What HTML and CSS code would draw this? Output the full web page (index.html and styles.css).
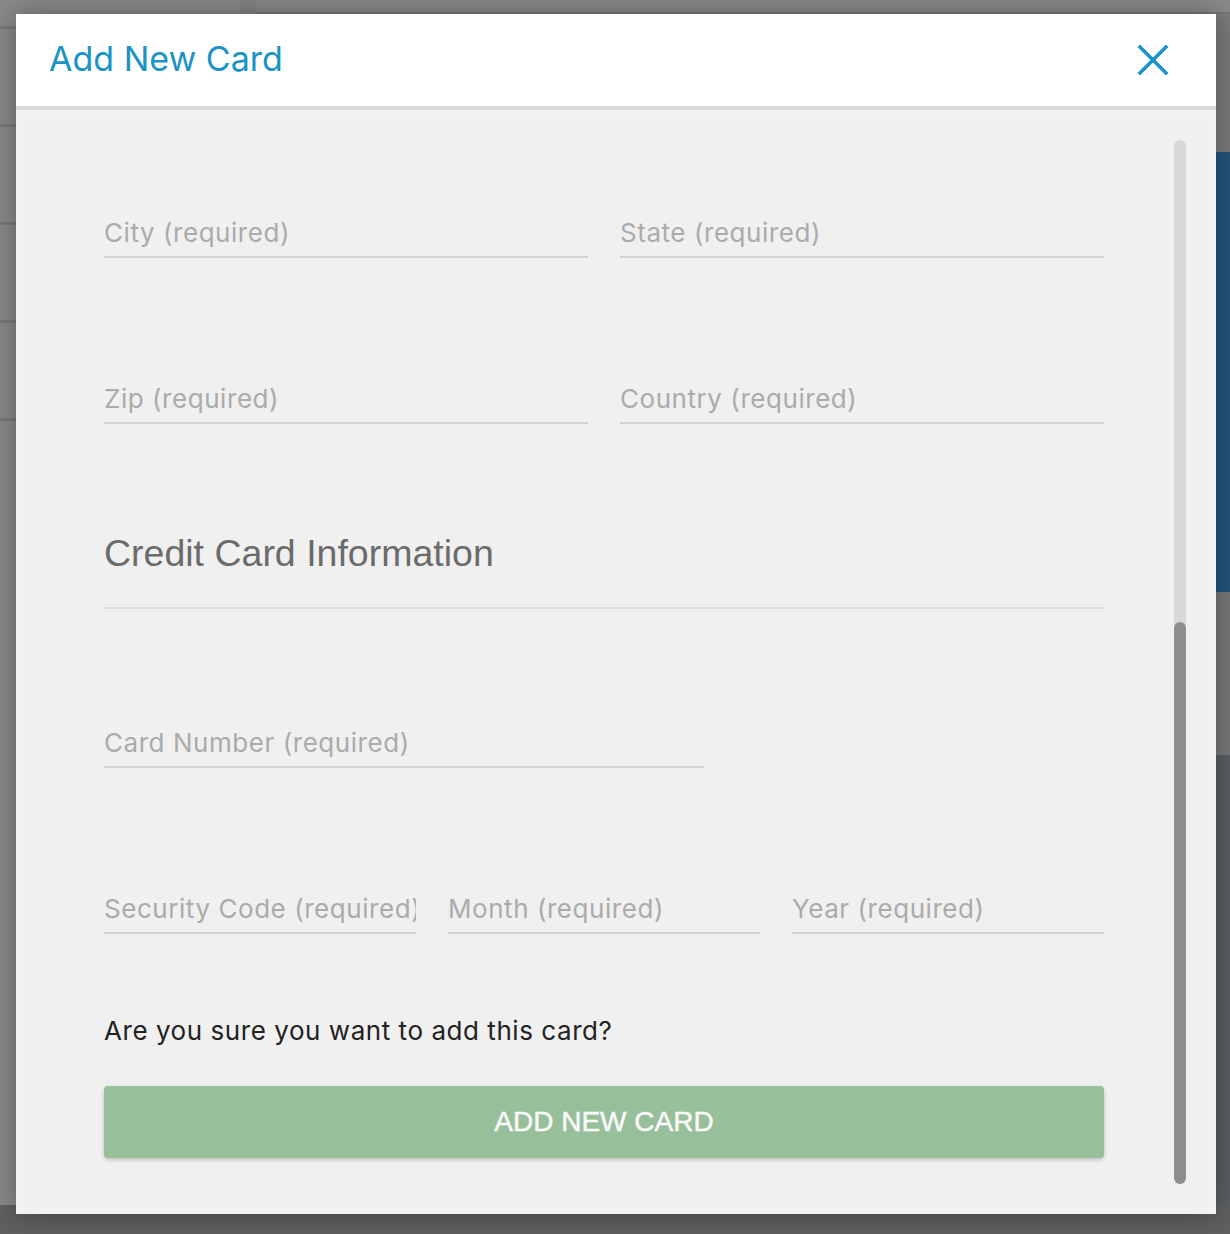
FILE: index.html
```html
<!DOCTYPE html>
<html lang="en">
<head>
    <meta charset="UTF-8">
    <meta name="viewport" content="width=device-width, initial-scale=1.0">
    <title>Add New Card</title>
    <link rel="stylesheet" href="styles.css">
</head>
<body>
    <!-- page behind the dialog -->
    <div class="page">
        <div class="sidebar">
            <div class="side-item"></div>
            <div class="side-item"></div>
            <div class="side-item"></div>
            <div class="side-item"></div>
            <div class="side-item"></div>
        </div>
        <div class="main">
            <div class="topbar"></div>
            <div class="main-gap"></div>
            <div class="block-blue"></div>
            <div class="block-grey"></div>
            <div class="block-slate"></div>
        </div>
    </div>

    <div class="modal">
        <div class="modal-header">
            <h1>Add New Card</h1>
            <button class="close-button" aria-label="Close">
                <svg width="30" height="30" viewBox="0 0 30 30">
                    <path d="M2 2 L28 28 M28 2 L2 28" stroke="#1a93c5" stroke-width="3.5" stroke-linecap="square" fill="none"/>
                </svg>
            </button>
        </div>
        <div class="modal-body">
            <div class="panel">
                <form class="card-form">
                    <div class="row row-first">
                        <input type="text" placeholder="City (required)">
                        <input type="text" placeholder="State (required)">
                    </div>
                    <div class="row">
                        <input type="text" placeholder="Zip (required)">
                        <input type="text" placeholder="Country (required)">
                    </div>

                    <h2>Credit Card Information</h2>

                    <div class="row row-single">
                        <input type="text" placeholder="Card Number (required)">
                    </div>
                    <div class="row row-three">
                        <input type="text" placeholder="Security Code (required)">
                        <input type="text" placeholder="Month (required)">
                        <input type="text" placeholder="Year (required)">
                    </div>

                    <p class="confirm">Are you sure you want to add this card?</p>
                    <button type="submit" class="add-button">ADD NEW CARD</button>
                </form>
                <div class="scrollbar">
                    <div class="thumb"></div>
                </div>
            </div>
        </div>
    </div>
</body>
</html>
```

FILE: styles.css
```css
body {
    margin: 0;
    height: 100vh;
    overflow: hidden;
    background-color: #606060;
    font-family: Inter, "Noto Sans", sans-serif;
}

/* background page */
.page {
    display: flex;
    height: 100%;
}

.sidebar {
    width: 256px;
    height: 1205px;
    background-color: #8a8a8a;
    border-right: 16px solid #848484;
    padding-top: 26px;
    box-sizing: border-box;
}

.side-item {
    height: 95px;
    border-top: 3px solid #7a7a7a;
}

.main {
    flex: 1;
    display: flex;
    flex-direction: column;
    background-color: #606060;
}

.topbar {
    height: 12px;
    background-color: #8a8a8a;
    border-bottom: 2px solid #767676;
}

.main-gap {
    height: 138px;
    background-color: #7c7c7c;
}

.block-blue {
    height: 440px;
    background-color: #24557b;
}

.block-grey {
    height: 163px;
    background-color: #7a7a7a;
}

.block-slate {
    height: 450px;
    background-color: #5a6064;
}

/* dialog */
.modal {
    position: fixed;
    left: 16px;
    top: 14px;
    width: 1200px;
    height: 1200px;
    display: flex;
    flex-direction: column;
    background-color: #f2f2f2;
    box-shadow: 0 0 28px rgba(0, 0, 0, 0.35);
}

.modal-header {
    height: 96px;
    box-sizing: border-box;
    display: flex;
    align-items: center;
    justify-content: space-between;
    padding: 0 48px 4px 33px;
    background-color: #fff;
    border-bottom: 4px solid #d9d9d9;
}

.modal-header h1 {
    margin: 0;
    font-size: 34px;
    font-weight: 400;
    color: #1a93c5;
}

.close-button {
    border: none;
    background: none;
    padding: 0;
    width: 30px;
    height: 30px;
    margin-top: 4px;
    cursor: pointer;
}

.modal-body {
    flex: 1;
    padding: 8px;
}

.panel {
    height: 100%;
    box-sizing: border-box;
    display: flex;
    padding: 0 22px 0 80px;
    background-color: #f0f0f0;
    overflow: hidden;
}

.card-form {
    width: 1000px;
    padding-top: 92px;
}

.row {
    display: grid;
    grid-template-columns: 1fr 1fr;
    gap: 32px;
    margin-top: 118px;
}

.row-first {
    margin-top: 0;
}

.row-single {
    grid-template-columns: 600px;
    margin-top: 111px;
}

.row-three {
    grid-template-columns: 1fr 1fr 1fr;
}

input {
    width: 100%;
    height: 48px;
    box-sizing: border-box;
    padding: 6px 0 8px;
    border: none;
    border-bottom: 2px solid #d2d2d2;
    background: transparent;
    font-family: Inter, "Noto Sans", sans-serif;
    font-size: 26px;
    letter-spacing: 0.55px;
    line-height: 32px;
    color: #444;
    outline: none;
}

input::placeholder {
    color: #ababab;
}

h2 {
    margin: 107px 0 0;
    height: 44px;
    padding-bottom: 32px;
    border-bottom: 2px solid #dedede;
    font-family: "Liberation Sans", Arial, sans-serif;
    font-size: 37.5px;
    font-weight: 400;
    line-height: 44px;
    color: #6b6b6b;
}

.confirm {
    margin: 82px 0 0;
    font-size: 26px;
    letter-spacing: 0.55px;
    line-height: 30px;
    color: #222;
}

.add-button {
    display: block;
    width: 100%;
    height: 72px;
    margin-top: 40px;
    border: none;
    border-radius: 4px;
    background-color: #97bf99;
    box-shadow: 0 2px 4px rgba(0, 0, 0, 0.2);
    font-family: "Liberation Sans", Arial, sans-serif;
    font-size: 28px;
    color: #f9f9f9;
    -webkit-text-stroke: 0.5px #f9f9f9;
    cursor: pointer;
}

.scrollbar {
    width: 12px;
    margin: 22px 0 22px 70px;
    display: flex;
    flex-direction: column;
    justify-content: flex-end;
    background-color: #d8d8d8;
    border-radius: 6px;
}

.thumb {
    height: 562px;
    background-color: #8e8e8e;
    border-radius: 6px;
}
```
